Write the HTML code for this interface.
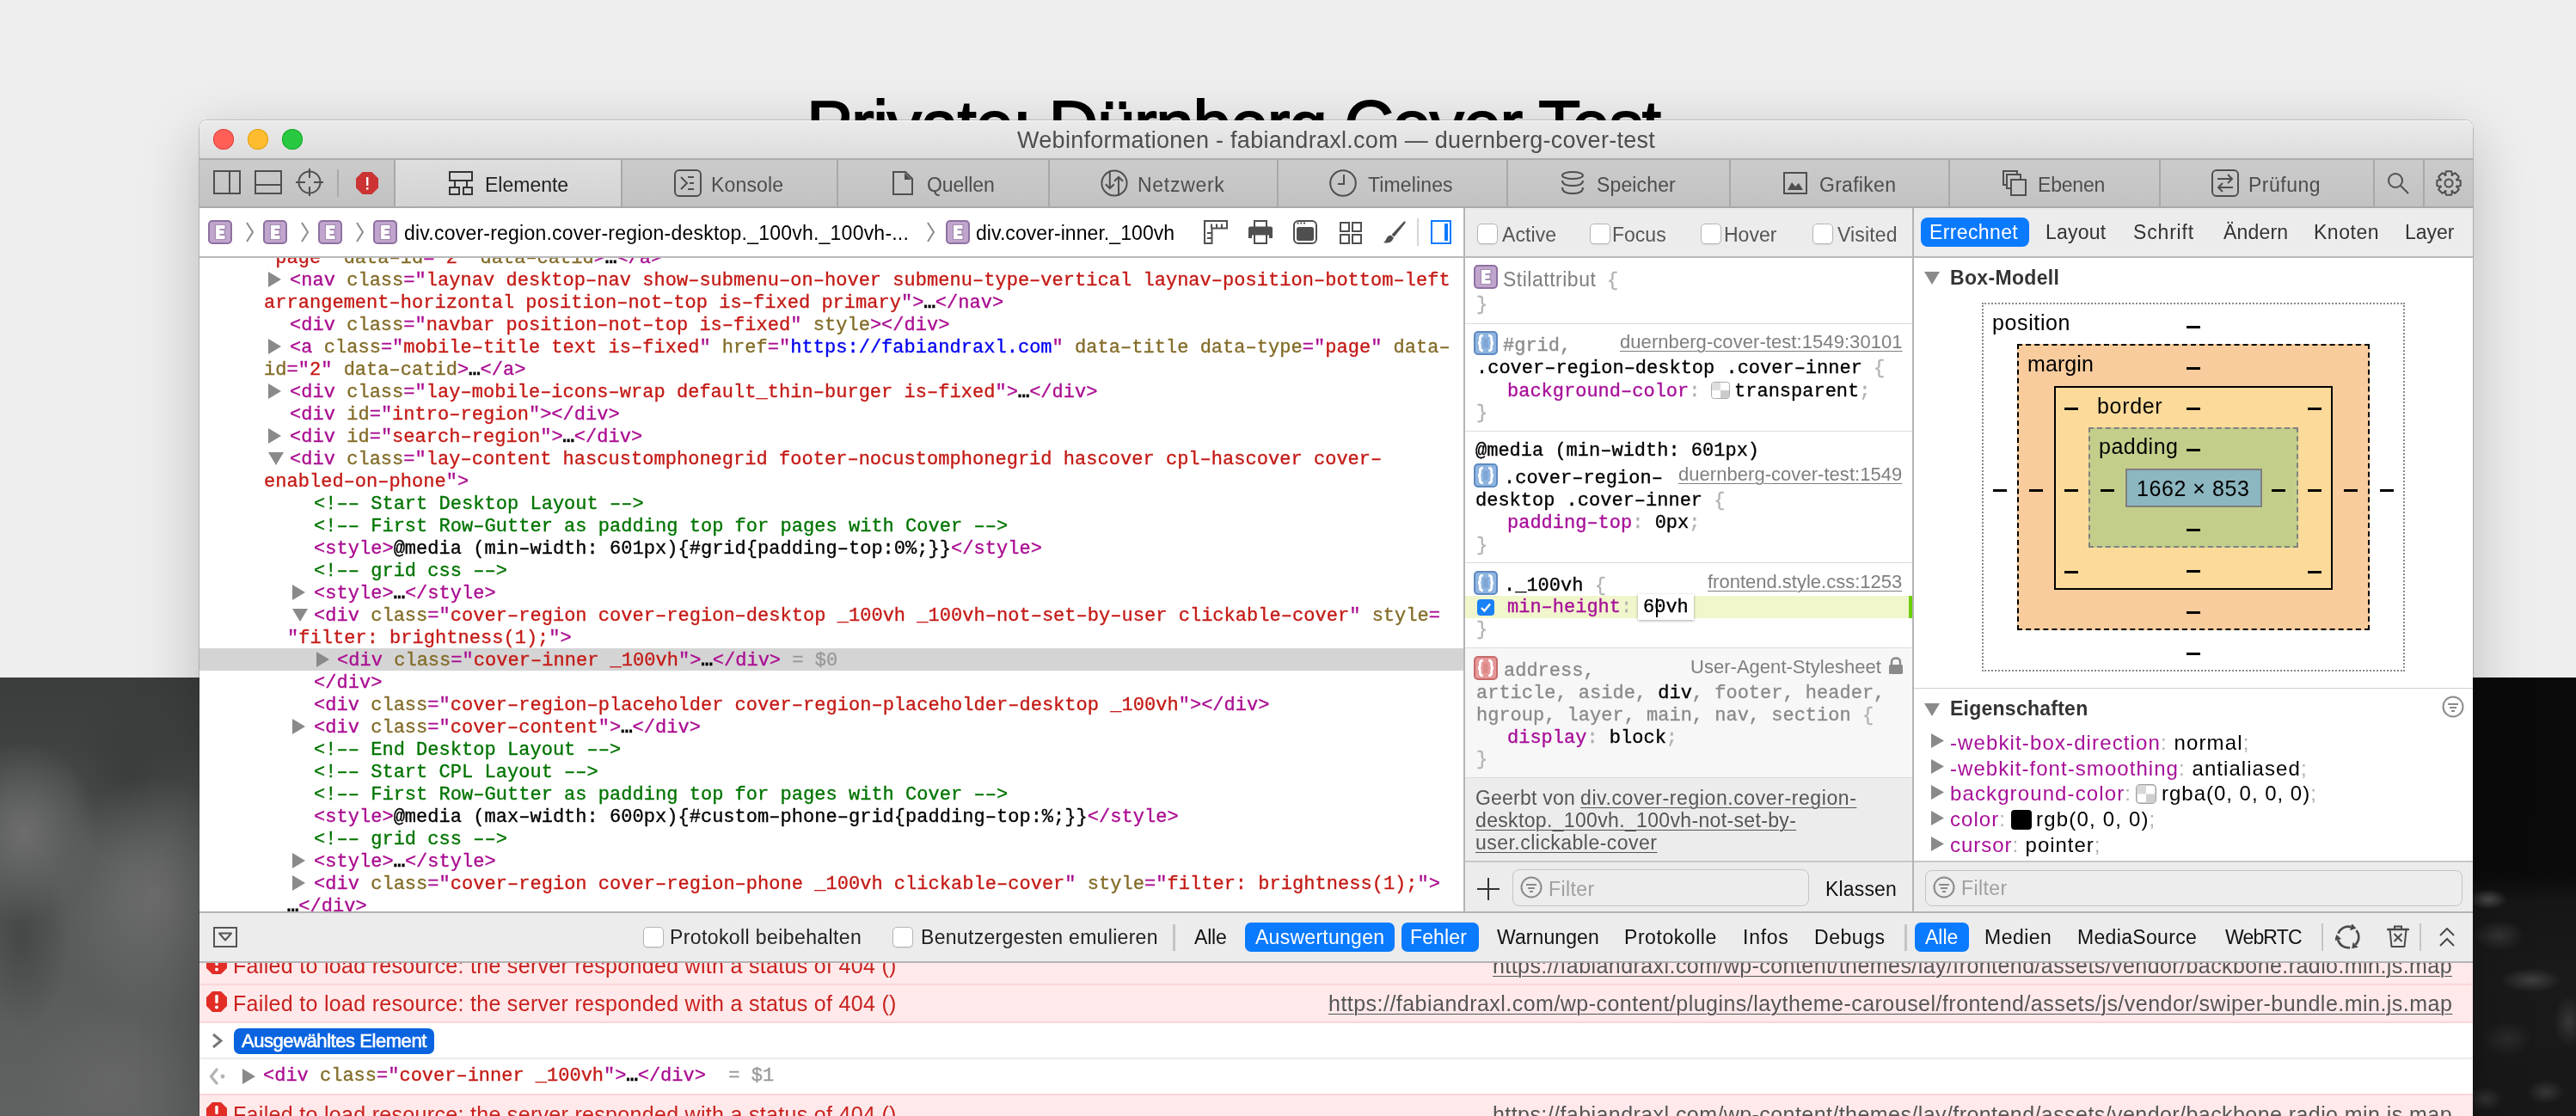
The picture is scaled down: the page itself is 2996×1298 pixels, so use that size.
<!DOCTYPE html><html><head><meta charset="utf-8"><style>
html,body{margin:0;padding:0;}
body{width:2996px;height:1298px;overflow:hidden;position:relative;background:#eeeeee;}
body div{position:absolute;}
.t{white-space:pre;line-height:1;will-change:transform;}
.m{-webkit-text-stroke:0.35px currentColor;}
.s{letter-spacing:0.3px;}
</style></head><body>
<div style="left:0px;top:0px;width:2996px;height:788px;background:#eeeeee;"></div><div class="t" style="left:938.00px;top:105.90px;font-family:'Liberation Sans', sans-serif;font-size:80px;color:#000;letter-spacing:-1.333px;-webkit-text-stroke:1.8px #000;">Private: Dürnberg Cover Test</div><div style="left:0px;top:788px;width:232px;height:510px;background:radial-gradient(ellipse 85px 105px at 28px 180px, rgba(114,114,114,0.85), rgba(114,114,114,0) 100%),radial-gradient(ellipse 120px 140px at 180px 255px, rgba(112,112,112,0.85), rgba(112,112,112,0) 100%),radial-gradient(ellipse 70px 110px at 150px 110px, rgba(56,58,58,0.75), rgba(56,58,58,0) 100%),radial-gradient(ellipse 55px 110px at 25px 300px, rgba(62,64,64,0.7), rgba(62,64,64,0) 100%),radial-gradient(ellipse 100px 90px at 130px 470px, rgba(108,108,108,0.5), rgba(108,108,108,0) 100%),linear-gradient(180deg,#3b3d3d 0px,#404242 80px,#4d4f4f 160px,#565858 260px,#5c5d5d 400px,#606161 510px);"></div><div style="left:2876px;top:788px;width:120px;height:510px;background:radial-gradient(ellipse 22px 12px at 18px 258px, rgba(120,120,120,0.55), rgba(120,120,120,0) 100%),radial-gradient(ellipse 30px 18px at 30px 300px, rgba(85,85,85,0.45), rgba(85,85,85,0) 100%),radial-gradient(ellipse 35px 14px at 68px 352px, rgba(100,100,100,0.5), rgba(100,100,100,0) 100%),radial-gradient(ellipse 18px 30px at 112px 400px, rgba(90,90,90,0.45), rgba(90,90,90,0) 100%),radial-gradient(ellipse 30px 20px at 40px 420px, rgba(70,70,70,0.4), rgba(70,70,70,0) 100%),radial-gradient(ellipse 22px 14px at 85px 482px, rgba(90,90,90,0.45), rgba(90,90,90,0) 100%),radial-gradient(ellipse 20px 14px at 15px 490px, rgba(90,90,90,0.4), rgba(90,90,90,0) 100%),linear-gradient(180deg,#0a0a0a 0px,#0b0b0b 230px,#161616 260px,#1a1a1a 350px,#181818 510px);"></div><div style="left:232px;top:140px;width:2644px;height:1298px;box-shadow:0 20px 70px rgba(0,0,0,0.22), 0 0 0 1px rgba(0,0,0,0.18);border-radius:9px 9px 0 0;"></div><div style="left:232px;top:140px;width:2644px;height:1158px;background:#fff;border-radius:9px 9px 0 0;overflow:hidden;"></div><div style="left:232px;top:140px;width:2644px;height:44px;background:linear-gradient(180deg,#ebebeb,#dcdcdc);border-radius:9px 9px 0 0;box-shadow:inset 0 1px 0 rgba(255,255,255,0.8);"></div><div style="left:232px;top:184px;width:2644px;height:2px;background:#ababab;"></div><div style="left:248px;top:150px;width:24px;height:24px;background:#ff5f57;border-radius:50%;box-shadow:inset 0 0 0 1px #e2463f;"></div><div style="left:288px;top:150px;width:24px;height:24px;background:#febc2e;border-radius:50%;box-shadow:inset 0 0 0 1px #e1a116;"></div><div style="left:328px;top:150px;width:24px;height:24px;background:#28c840;border-radius:50%;box-shadow:inset 0 0 0 1px #1aab29;"></div><div class="t" style="left:1183.00px;top:150.37px;font-family:'Liberation Sans', sans-serif;font-size:27px;color:#4d4d4d;letter-spacing:0.286px;">Webinformationen - fabiandraxl.com — duernberg-cover-test</div><div style="left:232px;top:186px;width:2644px;height:54px;background:linear-gradient(180deg,#cbcbcb,#c2c2c2);"></div><div style="left:232px;top:240px;width:2644px;height:2px;background:#a9a9a9;"></div><div style="left:460px;top:186px;width:262px;height:54px;background:linear-gradient(180deg,#dedede,#d3d3d3);"></div><div style="left:458px;top:186px;width:2px;height:54px;background:#a8a8a8;"></div><div style="left:722px;top:186px;width:2px;height:54px;background:#a8a8a8;"></div><div style="left:973px;top:186px;width:2px;height:54px;background:#a8a8a8;"></div><div style="left:1219px;top:186px;width:2px;height:54px;background:#a8a8a8;"></div><div style="left:1485px;top:186px;width:2px;height:54px;background:#a8a8a8;"></div><div style="left:1752px;top:186px;width:2px;height:54px;background:#a8a8a8;"></div><div style="left:2011px;top:186px;width:2px;height:54px;background:#a8a8a8;"></div><div style="left:2266px;top:186px;width:2px;height:54px;background:#a8a8a8;"></div><div style="left:2511px;top:186px;width:2px;height:54px;background:#a8a8a8;"></div><div style="left:2760px;top:186px;width:2px;height:54px;background:#a8a8a8;"></div><div style="left:2818px;top:186px;width:2px;height:54px;background:#a8a8a8;"></div><svg style="position:absolute;left:248px;top:198px;" width="32" height="28" viewBox="0 0 32 28"><rect x="1" y="1" width="30" height="26" fill="none" stroke="#4f4f4f" stroke-width="2"/><line x1="19" y1="1" x2="19" y2="27" stroke="#4f4f4f" stroke-width="2"/></svg><svg style="position:absolute;left:296px;top:198px;" width="32" height="28" viewBox="0 0 32 28"><rect x="1" y="1" width="30" height="26" fill="none" stroke="#4f4f4f" stroke-width="2"/><line x1="1" y1="17" x2="31" y2="17" stroke="#4f4f4f" stroke-width="2"/></svg><svg style="position:absolute;left:344px;top:196px;" width="32" height="32" viewBox="0 0 32 32"><circle cx="16" cy="16" r="12.5" fill="none" stroke="#4f4f4f" stroke-width="2"/><line x1="16" y1="0" x2="16" y2="11" stroke="#4f4f4f" stroke-width="2"/><line x1="16" y1="21" x2="16" y2="32" stroke="#4f4f4f" stroke-width="2"/><line x1="0" y1="16" x2="11" y2="16" stroke="#4f4f4f" stroke-width="2"/><line x1="21" y1="16" x2="32" y2="16" stroke="#4f4f4f" stroke-width="2"/></svg><div style="left:392px;top:197px;width:2px;height:32px;background:#a9a9a9;"></div><svg style="position:absolute;left:414px;top:200px;" width="26" height="26" viewBox="0 0 26 26"><polygon points="7.6,0 18.4,0 26,7.6 26,18.4 18.4,26 7.6,26 0,18.4 0,7.6" fill="#cc3333"/><rect x="12" y="6" width="2.4" height="10" fill="#fff"/><rect x="12" y="18" width="2.4" height="2.6" fill="#fff"/></svg><svg style="position:absolute;left:522px;top:199px;" width="28" height="28" viewBox="0 0 28 28"><rect x="1" y="1" width="26" height="10" fill="none" stroke="#333" stroke-width="2"/><line x1="7" y1="11" x2="7" y2="19" stroke="#333" stroke-width="2"/><line x1="21" y1="11" x2="21" y2="19" stroke="#333" stroke-width="2"/><rect x="1" y="19" width="11" height="8" fill="none" stroke="#333" stroke-width="2"/><rect x="17" y="19" width="10" height="8" fill="none" stroke="#333" stroke-width="2"/></svg><div class="t" style="left:564.00px;top:203.57px;font-family:'Liberation Sans', sans-serif;font-size:23px;color:#222;letter-spacing:0.000px;">Elemente</div><svg style="position:absolute;left:784px;top:197px;" width="32" height="32" viewBox="0 0 32 32"><rect x="1" y="1" width="30" height="30" rx="5" fill="none" stroke="#4f4f4f" stroke-width="2"/><polyline points="8,9 15,16 8,23" fill="none" stroke="#4f4f4f" stroke-width="2"/><line x1="16" y1="9" x2="23" y2="9" stroke="#4f4f4f" stroke-width="2"/><line x1="18" y1="16" x2="23" y2="16" stroke="#4f4f4f" stroke-width="2"/><line x1="16" y1="23" x2="23" y2="23" stroke="#4f4f4f" stroke-width="2"/></svg><div class="t" style="left:827.00px;top:203.57px;font-family:'Liberation Sans', sans-serif;font-size:23px;color:#4d4d4d;letter-spacing:0.167px;">Konsole</div><svg style="position:absolute;left:1038px;top:199px;" width="24" height="28" viewBox="0 0 24 28"><path d="M1 1 H15 L23 9 V27 H1 Z" fill="none" stroke="#4f4f4f" stroke-width="2"/><path d="M14 2 V10 H22" fill="#4f4f4f" stroke="none"/><polygon points="14,3 14,9 20,9" fill="#4f4f4f"/></svg><div class="t" style="left:1077.80px;top:203.57px;font-family:'Liberation Sans', sans-serif;font-size:23px;color:#4d4d4d;letter-spacing:-0.100px;">Quellen</div><svg style="position:absolute;left:1280px;top:197px;" width="32" height="32" viewBox="0 0 32 32"><circle cx="16" cy="16" r="14.6" fill="none" stroke="#4f4f4f" stroke-width="2"/><line x1="10.8" y1="1.5" x2="10.8" y2="22" stroke="#4f4f4f" stroke-width="2"/><polyline points="5.8,17.2 10.8,22.2 15.8,17.2" fill="none" stroke="#4f4f4f" stroke-width="2"/><line x1="21" y1="30.5" x2="21" y2="9.5" stroke="#4f4f4f" stroke-width="2"/><polyline points="16,13.8 21,8.8 26,13.8" fill="none" stroke="#4f4f4f" stroke-width="2"/></svg><div class="t" style="left:1323.00px;top:203.57px;font-family:'Liberation Sans', sans-serif;font-size:23px;color:#4d4d4d;letter-spacing:0.714px;">Netzwerk</div><svg style="position:absolute;left:1546px;top:197px;" width="32" height="32" viewBox="0 0 32 32"><circle cx="16" cy="16" r="14.8" fill="none" stroke="#4f4f4f" stroke-width="2"/><polyline points="17,6 17,17 10,17" fill="none" stroke="#4f4f4f" stroke-width="2"/></svg><div class="t" style="left:1591.00px;top:203.57px;font-family:'Liberation Sans', sans-serif;font-size:23px;color:#4d4d4d;letter-spacing:0.125px;">Timelines</div><svg style="position:absolute;left:1815px;top:199px;" width="28" height="28" viewBox="0 0 28 28"><ellipse cx="14" cy="5" rx="12" ry="4" fill="none" stroke="#4f4f4f" stroke-width="2"/><path d="M2 11 Q2 17 14 17 Q26 17 26 11" fill="none" stroke="#4f4f4f" stroke-width="2"/><path d="M2 19 Q2 26 14 26 Q26 26 26 19" fill="none" stroke="#4f4f4f" stroke-width="2"/></svg><div class="t" style="left:1857.00px;top:203.57px;font-family:'Liberation Sans', sans-serif;font-size:23px;color:#4d4d4d;letter-spacing:0.143px;">Speicher</div><svg style="position:absolute;left:2074px;top:200px;" width="28" height="26" viewBox="0 0 28 26"><rect x="1" y="1" width="26" height="24" fill="none" stroke="#4f4f4f" stroke-width="2"/><polygon points="5,21 10,12 14,17 18,13 23,21" fill="#4f4f4f"/></svg><div class="t" style="left:2116.00px;top:203.57px;font-family:'Liberation Sans', sans-serif;font-size:23px;color:#4d4d4d;letter-spacing:0.286px;">Grafiken</div><svg style="position:absolute;left:2329px;top:198px;" width="28" height="30" viewBox="0 0 28 30"><rect x="1" y="1" width="16" height="16" fill="none" stroke="#4f4f4f" stroke-width="2"/><rect x="5" y="5" width="16" height="16" fill="#c6c6c6" stroke="#4f4f4f" stroke-width="2"/><rect x="10" y="11" width="17" height="18" fill="#c6c6c6" stroke="#4f4f4f" stroke-width="2"/></svg><div class="t" style="left:2370.00px;top:203.57px;font-family:'Liberation Sans', sans-serif;font-size:23px;color:#4d4d4d;letter-spacing:-0.200px;">Ebenen</div><svg style="position:absolute;left:2572px;top:197px;" width="32" height="32" viewBox="0 0 32 32"><rect x="1" y="1" width="30" height="30" rx="5" fill="none" stroke="#4f4f4f" stroke-width="2"/><line x1="7" y1="11" x2="24" y2="11" stroke="#4f4f4f" stroke-width="2"/><polyline points="19,6 24,11 19,16" fill="none" stroke="#4f4f4f" stroke-width="2"/><line x1="8" y1="21" x2="25" y2="21" stroke="#4f4f4f" stroke-width="2"/><polyline points="13,16 8,21 13,26" fill="none" stroke="#4f4f4f" stroke-width="2"/></svg><div class="t" style="left:2615.00px;top:203.57px;font-family:'Liberation Sans', sans-serif;font-size:23px;color:#4d4d4d;letter-spacing:0.500px;">Prüfung</div><svg style="position:absolute;left:2776px;top:200px;" width="26" height="26" viewBox="0 0 26 26"><circle cx="10" cy="10" r="8" fill="none" stroke="#4f4f4f" stroke-width="2"/><line x1="16" y1="16" x2="25" y2="25" stroke="#4f4f4f" stroke-width="2"/></svg><svg style="position:absolute;left:2832px;top:197px;" width="32" height="32" viewBox="0 0 32 32"><polygon points="29.66,12.94 29.66,19.06 25.00,20.35 25.44,19.29 27.82,23.50 23.50,27.82 19.29,25.44 20.35,25.00 19.06,29.66 12.94,29.66 11.65,25.00 12.71,25.44 8.50,27.82 4.18,23.50 6.56,19.29 7.00,20.35 2.34,19.06 2.34,12.94 7.00,11.65 6.56,12.71 4.18,8.50 8.50,4.18 12.71,6.56 11.65,7.00 12.94,2.34 19.06,2.34 20.35,7.00 19.29,6.56 23.50,4.18 27.82,8.50 25.44,12.71 25.00,11.65" fill="none" stroke="#4f4f4f" stroke-width="2" stroke-linejoin="round"/><circle cx="16" cy="16" r="4.5" fill="none" stroke="#4f4f4f" stroke-width="2"/></svg><div style="left:232px;top:242px;width:1470px;height:56px;background:#fff;"></div><div style="left:1702px;top:242px;width:2px;height:818px;background:#b4b4b4;"></div><div style="left:1704px;top:242px;width:520px;height:56px;background:#ececec;"></div><div style="left:2224px;top:242px;width:2px;height:818px;background:#b4b4b4;"></div><div style="left:2226px;top:242px;width:650px;height:56px;background:#ececec;"></div><div style="left:232px;top:298px;width:2644px;height:2px;background:#b9b9b9;"></div><svg style="position:absolute;left:242px;top:256px;" width="28" height="28" viewBox="0 0 28 28"><rect x="1" y="1" width="26" height="26" rx="4" fill="#c0a5cd" stroke="#8f70a0" stroke-width="2"/><path d="M8.5 5.5 H20 V10.5 H14 V11.5 H19 V16.5 H14 V17.5 H20 V22.5 H8.5 Z" fill="#fff" stroke="#8f70a0" stroke-width="1.2" stroke-opacity="0.7"/></svg><svg style="position:absolute;left:306px;top:256px;" width="28" height="28" viewBox="0 0 28 28"><rect x="1" y="1" width="26" height="26" rx="4" fill="#c0a5cd" stroke="#8f70a0" stroke-width="2"/><path d="M8.5 5.5 H20 V10.5 H14 V11.5 H19 V16.5 H14 V17.5 H20 V22.5 H8.5 Z" fill="#fff" stroke="#8f70a0" stroke-width="1.2" stroke-opacity="0.7"/></svg><svg style="position:absolute;left:370px;top:256px;" width="28" height="28" viewBox="0 0 28 28"><rect x="1" y="1" width="26" height="26" rx="4" fill="#c0a5cd" stroke="#8f70a0" stroke-width="2"/><path d="M8.5 5.5 H20 V10.5 H14 V11.5 H19 V16.5 H14 V17.5 H20 V22.5 H8.5 Z" fill="#fff" stroke="#8f70a0" stroke-width="1.2" stroke-opacity="0.7"/></svg><svg style="position:absolute;left:434px;top:256px;" width="28" height="28" viewBox="0 0 28 28"><rect x="1" y="1" width="26" height="26" rx="4" fill="#c0a5cd" stroke="#8f70a0" stroke-width="2"/><path d="M8.5 5.5 H20 V10.5 H14 V11.5 H19 V16.5 H14 V17.5 H20 V22.5 H8.5 Z" fill="#fff" stroke="#8f70a0" stroke-width="1.2" stroke-opacity="0.7"/></svg><svg style="position:absolute;left:286px;top:258px;" width="10" height="24" viewBox="0 0 10 24"><polyline points="1,1 8,12 1,23" fill="none" stroke="#8a8a8a" stroke-width="2"/></svg><svg style="position:absolute;left:350px;top:258px;" width="10" height="24" viewBox="0 0 10 24"><polyline points="1,1 8,12 1,23" fill="none" stroke="#8a8a8a" stroke-width="2"/></svg><svg style="position:absolute;left:414px;top:258px;" width="10" height="24" viewBox="0 0 10 24"><polyline points="1,1 8,12 1,23" fill="none" stroke="#8a8a8a" stroke-width="2"/></svg><div class="t" style="left:470.00px;top:259.57px;font-family:'Liberation Sans', sans-serif;font-size:23px;color:#000;letter-spacing:0.222px;">div.cover-region.cover-region-desktop._100vh._100vh-...</div><svg style="position:absolute;left:1078px;top:258px;" width="10" height="24" viewBox="0 0 10 24"><polyline points="1,1 8,12 1,23" fill="none" stroke="#8a8a8a" stroke-width="2"/></svg><svg style="position:absolute;left:1100px;top:256px;" width="28" height="28" viewBox="0 0 28 28"><rect x="1" y="1" width="26" height="26" rx="4" fill="#c0a5cd" stroke="#8f70a0" stroke-width="2"/><path d="M8.5 5.5 H20 V10.5 H14 V11.5 H19 V16.5 H14 V17.5 H20 V22.5 H8.5 Z" fill="#fff" stroke="#8f70a0" stroke-width="1.2" stroke-opacity="0.7"/></svg><div class="t" style="left:1135.40px;top:259.57px;font-family:'Liberation Sans', sans-serif;font-size:23px;color:#000;letter-spacing:0.067px;">div.cover-inner._100vh</div><svg style="position:absolute;left:1400px;top:256px;" width="28" height="28" viewBox="0 0 28 28"><path d="M1 1 H27 V9.5 H9.5 V27 H1 Z" fill="none" stroke="#4f4f4f" stroke-width="2" stroke-linejoin="miter"/><path d="M9 4.5 V10 M15 4.5 V10 M21 4.5 V10 M4 15 H10 M4 21 H10" stroke="#4f4f4f" stroke-width="2"/></svg><svg style="position:absolute;left:1452px;top:256px;" width="28" height="28" viewBox="0 0 28 28"><path d="M7 8 V1 H21 V8" fill="none" stroke="#4f4f4f" stroke-width="2"/><path d="M2 7.5 H26 Q28 7.5 28 9.5 V21 H24 V17.5 H4 V21 H0 V9.5 Q0 7.5 2 7.5 Z" fill="#4f4f4f"/><path d="M7 17 V27 H21 V17" fill="none" stroke="#4f4f4f" stroke-width="2"/></svg><svg style="position:absolute;left:1504px;top:256px;" width="28" height="28" viewBox="0 0 28 28"><rect x="1" y="1" width="26" height="26" rx="5" fill="none" stroke="#4f4f4f" stroke-width="2"/><rect x="4" y="8" width="20" height="16" rx="2.5" fill="#4f4f4f"/><rect x="4.5" y="2.5" width="2" height="2" fill="#4f4f4f"/><rect x="8.3" y="2.5" width="2" height="2" fill="#4f4f4f"/><rect x="12" y="2.5" width="2" height="2" fill="#4f4f4f"/></svg><svg style="position:absolute;left:1558px;top:258px;" width="26" height="26" viewBox="0 0 26 26"><rect x="1" y="1" width="10" height="10" fill="none" stroke="#4f4f4f" stroke-width="2"/><rect x="15" y="1" width="10" height="10" fill="none" stroke="#4f4f4f" stroke-width="2"/><rect x="1" y="15" width="10" height="10" fill="none" stroke="#4f4f4f" stroke-width="2"/><rect x="15" y="15" width="10" height="10" fill="none" stroke="#4f4f4f" stroke-width="2"/></svg><svg style="position:absolute;left:1609px;top:257px;" width="26" height="26" viewBox="0 0 26 26"><path d="M25.5 0.5 Q26 1.5 25 3 L12.5 18.5 L9.5 16 L23.5 1 Q24.8 0 25.5 0.5 Z" fill="#4f4f4f"/><path d="M8.8 16.8 L11.8 19.3 Q11 24 6 25.3 Q2.5 26 0 25 Q2 24 3 21.5 Q4.5 17 8.8 16.8 Z" fill="#4f4f4f"/></svg><div style="left:1648px;top:254px;width:2px;height:32px;background:#d6d6d6;"></div><svg style="position:absolute;left:1664px;top:256px;" width="24" height="28" viewBox="0 0 24 28"><rect x="1" y="1" width="22" height="26" fill="none" stroke="#0a7aff" stroke-width="2"/><rect x="16" y="4" width="4" height="20" fill="#0a7aff"/></svg><div style="left:1718px;top:260px;width:22px;height:22px;background:#fff;border:1px solid #b5b5b5;border-radius:5px;box-shadow:0 1px 1px rgba(0,0,0,0.08);"></div><div class="t" style="left:1747.00px;top:261.57px;font-family:'Liberation Sans', sans-serif;font-size:23px;color:#555;letter-spacing:0.100px;">Active</div><div style="left:1849px;top:260px;width:22px;height:22px;background:#fff;border:1px solid #b5b5b5;border-radius:5px;box-shadow:0 1px 1px rgba(0,0,0,0.08);"></div><div class="t" style="left:1875.00px;top:261.57px;font-family:'Liberation Sans', sans-serif;font-size:23px;color:#555;letter-spacing:0.000px;">Focus</div><div style="left:1978px;top:260px;width:22px;height:22px;background:#fff;border:1px solid #b5b5b5;border-radius:5px;box-shadow:0 1px 1px rgba(0,0,0,0.08);"></div><div class="t" style="left:2004.60px;top:261.57px;font-family:'Liberation Sans', sans-serif;font-size:23px;color:#555;letter-spacing:0.000px;">Hover</div><div style="left:2108px;top:260px;width:22px;height:22px;background:#fff;border:1px solid #b5b5b5;border-radius:5px;box-shadow:0 1px 1px rgba(0,0,0,0.08);"></div><div class="t" style="left:2137.00px;top:261.57px;font-family:'Liberation Sans', sans-serif;font-size:23px;color:#555;letter-spacing:0.167px;">Visited</div><div style="left:2234px;top:253px;width:126px;height:34px;background:#0a7aff;border-radius:8px;"></div><div class="t" style="left:2243.80px;top:258.57px;font-family:'Liberation Sans', sans-serif;font-size:23px;color:#fff;letter-spacing:0.375px;">Errechnet</div><div class="t" style="left:2378.60px;top:258.57px;font-family:'Liberation Sans', sans-serif;font-size:23px;color:#333;letter-spacing:0.200px;">Layout</div><div class="t" style="left:2481.30px;top:258.57px;font-family:'Liberation Sans', sans-serif;font-size:23px;color:#333;letter-spacing:0.833px;">Schrift</div><div class="t" style="left:2585.50px;top:258.57px;font-family:'Liberation Sans', sans-serif;font-size:23px;color:#333;letter-spacing:0.200px;">Ändern</div><div class="t" style="left:2691.00px;top:258.57px;font-family:'Liberation Sans', sans-serif;font-size:23px;color:#333;letter-spacing:0.520px;">Knoten</div><div class="t" style="left:2797.00px;top:258.57px;font-family:'Liberation Sans', sans-serif;font-size:23px;color:#333;letter-spacing:0.000px;">Layer</div><div style="left:232px;top:300px;width:1470px;height:760px;background:#fff;overflow:hidden;"></div><div style="left:232px;top:300px;width:1470px;height:760px;overflow:hidden;"><div style="left:0px;top:454px;width:1470px;height:26px;background:#d4d4d4;"></div><div class="t m" style="left:74.60000000000002px;top:-9.85px;font-family:'Liberation Mono', monospace;font-size:22px;letter-spacing:0.03px;"><span style="color:#aa0d91">"</span><span style="color:#c41a16">page</span><span style="color:#aa0d91">"</span><span style="color:#000"> </span><span style="color:#836c28">data–id</span><span style="color:#aa0d91">=</span><span style="color:#aa0d91">"</span><span style="color:#c41a16">2</span><span style="color:#aa0d91">"</span><span style="color:#000"> </span><span style="color:#836c28">data–catid</span><span style="color:#aa0d91">&gt;</span><span style="color:#000;font-weight:bold">…</span><span style="color:#aa0d91">&lt;/a&gt;</span></div><div class="t m" style="left:104.80000000000001px;top:16.15px;font-family:'Liberation Mono', monospace;font-size:22px;letter-spacing:0.03px;"><span style="color:#aa0d91">&lt;nav</span><span style="color:#000"> </span><span style="color:#836c28">class</span><span style="color:#aa0d91">=</span><span style="color:#aa0d91">"</span><span style="color:#c41a16">laynav desktop–nav show–submenu–on–hover submenu–type–vertical laynav–position–bottom–left</span></div><svg style="position:absolute;left:80px;top:16px" width="16" height="18"><polygon points="0,0 15,9 0,18" fill="#8a8a8a"/></svg><div class="t m" style="left:74.60000000000002px;top:42.15px;font-family:'Liberation Mono', monospace;font-size:22px;letter-spacing:0.03px;"><span style="color:#c41a16">arrangement–horizontal position–not–top is–fixed primary</span><span style="color:#aa0d91">"</span><span style="color:#aa0d91">&gt;</span><span style="color:#000;font-weight:bold">…</span><span style="color:#aa0d91">&lt;/nav&gt;</span></div><div class="t m" style="left:104.80000000000001px;top:68.15px;font-family:'Liberation Mono', monospace;font-size:22px;letter-spacing:0.03px;"><span style="color:#aa0d91">&lt;div</span><span style="color:#000"> </span><span style="color:#836c28">class</span><span style="color:#aa0d91">=</span><span style="color:#aa0d91">"</span><span style="color:#c41a16">navbar position–not–top is–fixed</span><span style="color:#aa0d91">"</span><span style="color:#000"> </span><span style="color:#836c28">style</span><span style="color:#aa0d91">&gt;&lt;/div&gt;</span></div><div class="t m" style="left:104.80000000000001px;top:94.15px;font-family:'Liberation Mono', monospace;font-size:22px;letter-spacing:0.03px;"><span style="color:#aa0d91">&lt;a</span><span style="color:#000"> </span><span style="color:#836c28">class</span><span style="color:#aa0d91">=</span><span style="color:#aa0d91">"</span><span style="color:#c41a16">mobile–title text is–fixed</span><span style="color:#aa0d91">"</span><span style="color:#000"> </span><span style="color:#836c28">href</span><span style="color:#aa0d91">=</span><span style="color:#aa0d91">"</span><span style="color:#0000f2">https://fabiandraxl.com</span><span style="color:#aa0d91">"</span><span style="color:#000"> </span><span style="color:#836c28">data–title</span><span style="color:#000"> </span><span style="color:#836c28">data–type</span><span style="color:#aa0d91">=</span><span style="color:#aa0d91">"</span><span style="color:#c41a16">page</span><span style="color:#aa0d91">"</span><span style="color:#000"> </span><span style="color:#836c28">data–</span></div><svg style="position:absolute;left:80px;top:94px" width="16" height="18"><polygon points="0,0 15,9 0,18" fill="#8a8a8a"/></svg><div class="t m" style="left:74.60000000000002px;top:120.15px;font-family:'Liberation Mono', monospace;font-size:22px;letter-spacing:0.03px;"><span style="color:#836c28">id</span><span style="color:#aa0d91">=</span><span style="color:#aa0d91">"</span><span style="color:#c41a16">2</span><span style="color:#aa0d91">"</span><span style="color:#000"> </span><span style="color:#836c28">data–catid</span><span style="color:#aa0d91">&gt;</span><span style="color:#000;font-weight:bold">…</span><span style="color:#aa0d91">&lt;/a&gt;</span></div><div class="t m" style="left:104.80000000000001px;top:146.15px;font-family:'Liberation Mono', monospace;font-size:22px;letter-spacing:0.03px;"><span style="color:#aa0d91">&lt;div</span><span style="color:#000"> </span><span style="color:#836c28">class</span><span style="color:#aa0d91">=</span><span style="color:#aa0d91">"</span><span style="color:#c41a16">lay–mobile–icons–wrap default_thin–burger is–fixed</span><span style="color:#aa0d91">"</span><span style="color:#aa0d91">&gt;</span><span style="color:#000;font-weight:bold">…</span><span style="color:#aa0d91">&lt;/div&gt;</span></div><svg style="position:absolute;left:80px;top:146px" width="16" height="18"><polygon points="0,0 15,9 0,18" fill="#8a8a8a"/></svg><div class="t m" style="left:104.80000000000001px;top:172.15px;font-family:'Liberation Mono', monospace;font-size:22px;letter-spacing:0.03px;"><span style="color:#aa0d91">&lt;div</span><span style="color:#000"> </span><span style="color:#836c28">id</span><span style="color:#aa0d91">=</span><span style="color:#aa0d91">"</span><span style="color:#c41a16">intro–region</span><span style="color:#aa0d91">"</span><span style="color:#aa0d91">&gt;&lt;/div&gt;</span></div><div class="t m" style="left:104.80000000000001px;top:198.15px;font-family:'Liberation Mono', monospace;font-size:22px;letter-spacing:0.03px;"><span style="color:#aa0d91">&lt;div</span><span style="color:#000"> </span><span style="color:#836c28">id</span><span style="color:#aa0d91">=</span><span style="color:#aa0d91">"</span><span style="color:#c41a16">search–region</span><span style="color:#aa0d91">"</span><span style="color:#aa0d91">&gt;</span><span style="color:#000;font-weight:bold">…</span><span style="color:#aa0d91">&lt;/div&gt;</span></div><svg style="position:absolute;left:80px;top:198px" width="16" height="18"><polygon points="0,0 15,9 0,18" fill="#8a8a8a"/></svg><div class="t m" style="left:104.80000000000001px;top:224.15px;font-family:'Liberation Mono', monospace;font-size:22px;letter-spacing:0.03px;"><span style="color:#aa0d91">&lt;div</span><span style="color:#000"> </span><span style="color:#836c28">class</span><span style="color:#aa0d91">=</span><span style="color:#aa0d91">"</span><span style="color:#c41a16">lay–content hascustomphonegrid footer–nocustomphonegrid hascover cpl–hascover cover–</span></div><svg style="position:absolute;left:80px;top:226px" width="18" height="16"><polygon points="0,0 18,0 9,15" fill="#8a8a8a"/></svg><div class="t m" style="left:74.60000000000002px;top:250.15px;font-family:'Liberation Mono', monospace;font-size:22px;letter-spacing:0.03px;"><span style="color:#c41a16">enabled–on–phone</span><span style="color:#aa0d91">"</span><span style="color:#aa0d91">&gt;</span></div><div class="t m" style="left:132.5px;top:276.15px;font-family:'Liberation Mono', monospace;font-size:22px;letter-spacing:0.03px;"><span style="color:#007400">&lt;!–– Start Desktop Layout ––&gt;</span></div><div class="t m" style="left:132.5px;top:302.15px;font-family:'Liberation Mono', monospace;font-size:22px;letter-spacing:0.03px;"><span style="color:#007400">&lt;!–– First Row–Gutter as padding top for pages with Cover ––&gt;</span></div><div class="t m" style="left:132.5px;top:328.15px;font-family:'Liberation Mono', monospace;font-size:22px;letter-spacing:0.03px;"><span style="color:#aa0d91">&lt;style&gt;</span><span style="color:#000">@media (min–width: 601px){#grid{padding–top:0%;}}</span><span style="color:#aa0d91">&lt;/style&gt;</span></div><div class="t m" style="left:132.5px;top:354.15px;font-family:'Liberation Mono', monospace;font-size:22px;letter-spacing:0.03px;"><span style="color:#007400">&lt;!–– grid css ––&gt;</span></div><div class="t m" style="left:132.5px;top:380.15px;font-family:'Liberation Mono', monospace;font-size:22px;letter-spacing:0.03px;"><span style="color:#aa0d91">&lt;style&gt;</span><span style="color:#000;font-weight:bold">…</span><span style="color:#aa0d91">&lt;/style&gt;</span></div><svg style="position:absolute;left:108px;top:380px" width="16" height="18"><polygon points="0,0 15,9 0,18" fill="#8a8a8a"/></svg><div class="t m" style="left:132.5px;top:406.15px;font-family:'Liberation Mono', monospace;font-size:22px;letter-spacing:0.03px;"><span style="color:#aa0d91">&lt;div</span><span style="color:#000"> </span><span style="color:#836c28">class</span><span style="color:#aa0d91">=</span><span style="color:#aa0d91">"</span><span style="color:#c41a16">cover–region cover–region–desktop _100vh _100vh–not–set–by–user clickable–cover</span><span style="color:#aa0d91">"</span><span style="color:#000"> </span><span style="color:#836c28">style</span><span style="color:#aa0d91">=</span></div><svg style="position:absolute;left:108px;top:408px" width="18" height="16"><polygon points="0,0 18,0 9,15" fill="#8a8a8a"/></svg><div class="t m" style="left:102.30000000000001px;top:432.15px;font-family:'Liberation Mono', monospace;font-size:22px;letter-spacing:0.03px;"><span style="color:#aa0d91">"</span><span style="color:#c41a16">filter: brightness(1);</span><span style="color:#aa0d91">"</span><span style="color:#aa0d91">&gt;</span></div><div class="t m" style="left:160.39999999999998px;top:458.15px;font-family:'Liberation Mono', monospace;font-size:22px;letter-spacing:0.03px;"><span style="color:#aa0d91">&lt;div</span><span style="color:#000"> </span><span style="color:#836c28">class</span><span style="color:#aa0d91">=</span><span style="color:#aa0d91">"</span><span style="color:#c41a16">cover–inner _100vh</span><span style="color:#aa0d91">"</span><span style="color:#aa0d91">&gt;</span><span style="color:#000;font-weight:bold">…</span><span style="color:#aa0d91">&lt;/div&gt;</span><span style="color:#000"> </span><span style="color:#999">= $0</span></div><svg style="position:absolute;left:136px;top:458px" width="16" height="18"><polygon points="0,0 15,9 0,18" fill="#8a8a8a"/></svg><div class="t m" style="left:132.5px;top:484.15px;font-family:'Liberation Mono', monospace;font-size:22px;letter-spacing:0.03px;"><span style="color:#aa0d91">&lt;/div&gt;</span></div><div class="t m" style="left:132.5px;top:510.15px;font-family:'Liberation Mono', monospace;font-size:22px;letter-spacing:0.03px;"><span style="color:#aa0d91">&lt;div</span><span style="color:#000"> </span><span style="color:#836c28">class</span><span style="color:#aa0d91">=</span><span style="color:#aa0d91">"</span><span style="color:#c41a16">cover–region–placeholder cover–region–placeholder–desktop _100vh</span><span style="color:#aa0d91">"</span><span style="color:#aa0d91">&gt;&lt;/div&gt;</span></div><div class="t m" style="left:132.5px;top:536.15px;font-family:'Liberation Mono', monospace;font-size:22px;letter-spacing:0.03px;"><span style="color:#aa0d91">&lt;div</span><span style="color:#000"> </span><span style="color:#836c28">class</span><span style="color:#aa0d91">=</span><span style="color:#aa0d91">"</span><span style="color:#c41a16">cover–content</span><span style="color:#aa0d91">"</span><span style="color:#aa0d91">&gt;</span><span style="color:#000;font-weight:bold">…</span><span style="color:#aa0d91">&lt;/div&gt;</span></div><svg style="position:absolute;left:108px;top:536px" width="16" height="18"><polygon points="0,0 15,9 0,18" fill="#8a8a8a"/></svg><div class="t m" style="left:132.5px;top:562.15px;font-family:'Liberation Mono', monospace;font-size:22px;letter-spacing:0.03px;"><span style="color:#007400">&lt;!–– End Desktop Layout ––&gt;</span></div><div class="t m" style="left:132.5px;top:588.15px;font-family:'Liberation Mono', monospace;font-size:22px;letter-spacing:0.03px;"><span style="color:#007400">&lt;!–– Start CPL Layout ––&gt;</span></div><div class="t m" style="left:132.5px;top:614.15px;font-family:'Liberation Mono', monospace;font-size:22px;letter-spacing:0.03px;"><span style="color:#007400">&lt;!–– First Row–Gutter as padding top for pages with Cover ––&gt;</span></div><div class="t m" style="left:132.5px;top:640.15px;font-family:'Liberation Mono', monospace;font-size:22px;letter-spacing:0.03px;"><span style="color:#aa0d91">&lt;style&gt;</span><span style="color:#000">@media (max–width: 600px){#custom–phone–grid{padding–top:%;}}</span><span style="color:#aa0d91">&lt;/style&gt;</span></div><div class="t m" style="left:132.5px;top:666.15px;font-family:'Liberation Mono', monospace;font-size:22px;letter-spacing:0.03px;"><span style="color:#007400">&lt;!–– grid css ––&gt;</span></div><div class="t m" style="left:132.5px;top:692.15px;font-family:'Liberation Mono', monospace;font-size:22px;letter-spacing:0.03px;"><span style="color:#aa0d91">&lt;style&gt;</span><span style="color:#000;font-weight:bold">…</span><span style="color:#aa0d91">&lt;/style&gt;</span></div><svg style="position:absolute;left:108px;top:692px" width="16" height="18"><polygon points="0,0 15,9 0,18" fill="#8a8a8a"/></svg><div class="t m" style="left:132.5px;top:718.15px;font-family:'Liberation Mono', monospace;font-size:22px;letter-spacing:0.03px;"><span style="color:#aa0d91">&lt;div</span><span style="color:#000"> </span><span style="color:#836c28">class</span><span style="color:#aa0d91">=</span><span style="color:#aa0d91">"</span><span style="color:#c41a16">cover–region cover–region–phone _100vh clickable–cover</span><span style="color:#aa0d91">"</span><span style="color:#000"> </span><span style="color:#836c28">style</span><span style="color:#aa0d91">=</span><span style="color:#aa0d91">"</span><span style="color:#c41a16">filter: brightness(1);</span><span style="color:#aa0d91">"</span><span style="color:#aa0d91">&gt;</span></div><svg style="position:absolute;left:108px;top:718px" width="16" height="18"><polygon points="0,0 15,9 0,18" fill="#8a8a8a"/></svg><div class="t m" style="left:102.30000000000001px;top:744.15px;font-family:'Liberation Mono', monospace;font-size:22px;letter-spacing:0.03px;"><span style="color:#000;font-weight:bold">…</span><span style="color:#aa0d91">&lt;/div&gt;</span></div></div><div style="left:1704px;top:300px;width:520px;height:703px;background:#fff;"></div><svg style="position:absolute;left:1714px;top:308px;" width="28" height="28" viewBox="0 0 28 28"><rect x="1" y="1" width="26" height="26" rx="4" fill="#c0a5cd" stroke="#8f70a0" stroke-width="2"/><path d="M8.5 5.5 H20 V10.5 H14 V11.5 H19 V16.5 H14 V17.5 H20 V22.5 H8.5 Z" fill="#fff" stroke="#8f70a0" stroke-width="1.2" stroke-opacity="0.7"/></svg><div class="t" style="left:1748.00px;top:313.57px;font-family:'Liberation Sans', sans-serif;font-size:23px;color:#7f7f7f;letter-spacing:0.509px;">Stilattribut</div><div class="t m" style="left:1869px;top:316.15px;font-family:'Liberation Mono', monospace;font-size:22px;"><span style="color:#b2b2b2">{</span></div><div class="t m" style="left:1717px;top:344.15px;font-family:'Liberation Mono', monospace;font-size:22px;"><span style="color:#b2b2b2">}</span></div><div style="left:1704px;top:376px;width:520px;height:1px;background:#dcdcdc;"></div><svg style="position:absolute;left:1714px;top:385px;" width="28" height="28" viewBox="0 0 28 28"><rect x="1" y="1" width="26" height="26" rx="4" fill="#8fb5e0" stroke="#5f8ac0" stroke-width="2"/><rect x="11.3" y="8.5" width="5.4" height="11" fill="#5f8ac0" opacity="0.35"/><path d="M10.8 5.2 Q7.3 5.2 7.3 8.5 V11 Q7.3 14 5 14 Q7.3 14 7.3 17 V19.5 Q7.3 22.8 10.8 22.8" fill="none" stroke="#fff" stroke-width="2.8"/><path d="M17.2 5.2 Q20.7 5.2 20.7 8.5 V11 Q20.7 14 23 14 Q20.7 14 20.7 17 V19.5 Q20.7 22.8 17.2 22.8" fill="none" stroke="#fff" stroke-width="2.8"/></svg><div class="t m" style="left:1748px;top:392.15px;font-family:'Liberation Mono', monospace;font-size:22px;"><span style="color:#8a8a8a">#grid,</span></div><div class="t" style="left:1884.00px;top:387.37px;font-family:'Liberation Sans', sans-serif;font-size:22px;color:#7f7f7f;letter-spacing:0.067px;text-decoration:underline;text-decoration-thickness:1px;text-underline-offset:3px;">duernberg-cover-test:1549:30101</div><div class="t m" style="left:1717px;top:418.15px;font-family:'Liberation Mono', monospace;font-size:22px;"><span style="color:#000">.cover–region–desktop .cover–inner </span><span style="color:#b2b2b2">{</span></div><div class="t m" style="left:1753px;top:445.15px;font-family:'Liberation Mono', monospace;font-size:22px;"><span style="color:#a70f99">background–color</span><span style="color:#b2b2b2">:</span><span style="color:#000">   transparent</span><span style="color:#b2b2b2">;</span></div><svg style="position:absolute;left:1990px;top:444px;" width="22" height="20" viewBox="0 0 22 20"><rect x="0.5" y="0.5" width="21" height="19" rx="3" fill="#fff" stroke="#aaa"/><rect x="1" y="1" width="10" height="9" fill="#ddd"/><rect x="11" y="10" width="10" height="9" fill="#ccc"/></svg><div class="t m" style="left:1717px;top:470.15px;font-family:'Liberation Mono', monospace;font-size:22px;"><span style="color:#b2b2b2">}</span></div><div style="left:1704px;top:501px;width:520px;height:1px;background:#dcdcdc;"></div><div class="t m" style="left:1716px;top:514.15px;font-family:'Liberation Mono', monospace;font-size:22px;"><span style="color:#000">@media (min–width: 601px)</span></div><svg style="position:absolute;left:1714px;top:539px;" width="28" height="28" viewBox="0 0 28 28"><rect x="1" y="1" width="26" height="26" rx="4" fill="#8fb5e0" stroke="#5f8ac0" stroke-width="2"/><rect x="11.3" y="8.5" width="5.4" height="11" fill="#5f8ac0" opacity="0.35"/><path d="M10.8 5.2 Q7.3 5.2 7.3 8.5 V11 Q7.3 14 5 14 Q7.3 14 7.3 17 V19.5 Q7.3 22.8 10.8 22.8" fill="none" stroke="#fff" stroke-width="2.8"/><path d="M17.2 5.2 Q20.7 5.2 20.7 8.5 V11 Q20.7 14 23 14 Q20.7 14 20.7 17 V19.5 Q20.7 22.8 17.2 22.8" fill="none" stroke="#fff" stroke-width="2.8"/></svg><div class="t m" style="left:1749px;top:546.15px;font-family:'Liberation Mono', monospace;font-size:22px;"><span style="color:#000">.cover–region–</span></div><div class="t" style="left:1952.00px;top:541.37px;font-family:'Liberation Sans', sans-serif;font-size:22px;color:#7f7f7f;letter-spacing:0.042px;text-decoration:underline;text-decoration-thickness:1px;text-underline-offset:3px;">duernberg-cover-test:1549</div><div class="t m" style="left:1716px;top:572.15px;font-family:'Liberation Mono', monospace;font-size:22px;"><span style="color:#000">desktop .cover–inner </span><span style="color:#b2b2b2">{</span></div><div class="t m" style="left:1753px;top:598.15px;font-family:'Liberation Mono', monospace;font-size:22px;"><span style="color:#a70f99">padding–top</span><span style="color:#b2b2b2">:</span><span style="color:#000"> 0px</span><span style="color:#b2b2b2">;</span></div><div class="t m" style="left:1717px;top:624.15px;font-family:'Liberation Mono', monospace;font-size:22px;"><span style="color:#b2b2b2">}</span></div><div style="left:1704px;top:654px;width:520px;height:1px;background:#dcdcdc;"></div><svg style="position:absolute;left:1714px;top:664px;" width="28" height="28" viewBox="0 0 28 28"><rect x="1" y="1" width="26" height="26" rx="4" fill="#8fb5e0" stroke="#5f8ac0" stroke-width="2"/><rect x="11.3" y="8.5" width="5.4" height="11" fill="#5f8ac0" opacity="0.35"/><path d="M10.8 5.2 Q7.3 5.2 7.3 8.5 V11 Q7.3 14 5 14 Q7.3 14 7.3 17 V19.5 Q7.3 22.8 10.8 22.8" fill="none" stroke="#fff" stroke-width="2.8"/><path d="M17.2 5.2 Q20.7 5.2 20.7 8.5 V11 Q20.7 14 23 14 Q20.7 14 20.7 17 V19.5 Q20.7 22.8 17.2 22.8" fill="none" stroke="#fff" stroke-width="2.8"/></svg><div class="t m" style="left:1749px;top:671.15px;font-family:'Liberation Mono', monospace;font-size:22px;"><span style="color:#000">._100vh </span><span style="color:#b2b2b2">{</span></div><div class="t" style="left:1986.00px;top:666.37px;font-family:'Liberation Sans', sans-serif;font-size:22px;color:#7f7f7f;letter-spacing:0.000px;text-decoration:underline;text-decoration-thickness:1px;text-underline-offset:3px;">frontend.style.css:1253</div><div style="left:1704px;top:693px;width:520px;height:26px;background:#f1f6cc;"></div><div style="left:2220px;top:693px;width:4px;height:26px;background:#6cd100;"></div><svg style="position:absolute;left:1718px;top:697px;" width="20" height="19" viewBox="0 0 20 19"><rect x="0" y="0" width="20" height="19" rx="4" fill="#1a82f7"/><polyline points="5,10 8.5,13.5 15,5.5" fill="none" stroke="#fff" stroke-width="2.4"/></svg><div class="t m" style="left:1753px;top:696.15px;font-family:'Liberation Mono', monospace;font-size:22px;"><span style="color:#a70f99">min–height</span><span style="color:#b2b2b2">:</span></div><div style="left:1905px;top:691px;width:65px;height:30px;background:#fff;box-shadow:0 1px 3px rgba(0,0,0,0.35);"></div><div class="t m" style="left:1911px;top:696.15px;font-family:'Liberation Mono', monospace;font-size:22px;"><span style="color:#000">60vh</span></div><div style="left:1926px;top:696px;width:2px;height:22px;background:#000;"></div><div class="t m" style="left:1717px;top:722.15px;font-family:'Liberation Mono', monospace;font-size:22px;"><span style="color:#b2b2b2">}</span></div><div style="left:1704px;top:753px;width:520px;height:1px;background:#dcdcdc;"></div><div style="left:1704px;top:754px;width:520px;height:150px;background:#f7f7f7;"></div><svg style="position:absolute;left:1714px;top:763px;" width="28" height="28" viewBox="0 0 28 28"><rect x="1" y="1" width="26" height="26" rx="4" fill="#e79898" stroke="#c86a6a" stroke-width="2"/><rect x="11.3" y="8.5" width="5.4" height="11" fill="#c86a6a" opacity="0.35"/><path d="M10.8 5.2 Q7.3 5.2 7.3 8.5 V11 Q7.3 14 5 14 Q7.3 14 7.3 17 V19.5 Q7.3 22.8 10.8 22.8" fill="none" stroke="#fff" stroke-width="2.8"/><path d="M17.2 5.2 Q20.7 5.2 20.7 8.5 V11 Q20.7 14 23 14 Q20.7 14 20.7 17 V19.5 Q20.7 22.8 17.2 22.8" fill="none" stroke="#fff" stroke-width="2.8"/></svg><div class="t m" style="left:1749px;top:770.15px;font-family:'Liberation Mono', monospace;font-size:22px;"><span style="color:#8a8a8a">address,</span></div><div class="t" style="left:1966.00px;top:765.37px;font-family:'Liberation Sans', sans-serif;font-size:22px;color:#7f7f7f;letter-spacing:0.025px;">User-Agent-Stylesheet</div><svg style="position:absolute;left:2196px;top:764px;" width="18" height="20" viewBox="0 0 18 20"><path d="M4 9 V6 Q4 1.5 9 1.5 Q14 1.5 14 6 V9" fill="none" stroke="#8a8a8a" stroke-width="2.4"/><rect x="1" y="9" width="16" height="11" rx="1.5" fill="#8a8a8a"/></svg><div class="t m" style="left:1717px;top:796.15px;font-family:'Liberation Mono', monospace;font-size:22px;"><span style="color:#8a8a8a">article, aside, </span><span style="color:#000">div</span><span style="color:#8a8a8a">, footer, header,</span></div><div class="t m" style="left:1717px;top:822.15px;font-family:'Liberation Mono', monospace;font-size:22px;"><span style="color:#8a8a8a">hgroup, layer, main, nav, section </span><span style="color:#b2b2b2">{</span></div><div class="t m" style="left:1753px;top:848.15px;font-family:'Liberation Mono', monospace;font-size:22px;"><span style="color:#a70f99">display</span><span style="color:#b2b2b2">:</span><span style="color:#000"> block</span><span style="color:#b2b2b2">;</span></div><div class="t m" style="left:1717px;top:873.15px;font-family:'Liberation Mono', monospace;font-size:22px;"><span style="color:#b2b2b2">}</span></div><div style="left:1704px;top:904px;width:520px;height:1px;background:#dcdcdc;"></div><div style="left:1704px;top:905px;width:520px;height:96px;background:#ececec;"></div><div class="t" style="left:1715.70px;top:916.57px;font-family:'Liberation Sans', sans-serif;font-size:23px;color:#555;letter-spacing:0.211px;">Geerbt von</div><div class="t" style="left:1838.00px;top:916.57px;font-family:'Liberation Sans', sans-serif;font-size:23px;color:#555;letter-spacing:0.586px;text-decoration:underline;text-decoration-thickness:1px;text-underline-offset:3px;">div.cover-region.cover-region-</div><div class="t" style="left:1715.70px;top:942.57px;font-family:'Liberation Sans', sans-serif;font-size:23px;color:#555;letter-spacing:0.344px;text-decoration:underline;text-decoration-thickness:1px;text-underline-offset:3px;">desktop._100vh._100vh-not-set-by-</div><div class="t" style="left:1715.70px;top:968.57px;font-family:'Liberation Sans', sans-serif;font-size:23px;color:#555;letter-spacing:0.474px;text-decoration:underline;text-decoration-thickness:1px;text-underline-offset:3px;">user.clickable-cover</div><div style="left:1704px;top:1001px;width:520px;height:2px;background:#c8c8c8;"></div><div style="left:1704px;top:1003px;width:520px;height:57px;background:#ececec;"></div><svg style="position:absolute;left:1718px;top:1021px;" width="26" height="26" viewBox="0 0 26 26"><path d="M13 0 V26 M0 13 H26" stroke="#333" stroke-width="2"/></svg><div style="left:1759px;top:1011px;width:343px;height:41px;background:#ededed;border:1px solid #c4c4c4;border-radius:8px;"></div><svg style="position:absolute;left:1768px;top:1019px;" width="26" height="26" viewBox="0 0 26 26"><circle cx="13" cy="13" r="11.5" fill="none" stroke="#8a8a8a" stroke-width="2"/><path d="M7 10 H19 M9 14 H17 M11 18 H15" stroke="#8a8a8a" stroke-width="2"/></svg><div class="t" style="left:1800.80px;top:1022.57px;font-family:'Liberation Sans', sans-serif;font-size:23px;color:#a0a0a0;letter-spacing:0.400px;">Filter</div><div class="t" style="left:2123.00px;top:1022.57px;font-family:'Liberation Sans', sans-serif;font-size:23px;color:#111;letter-spacing:0.167px;">Klassen</div><div style="left:2226px;top:300px;width:650px;height:703px;background:#fff;"></div><svg style="position:absolute;left:2238px;top:316px;" width="18" height="15" viewBox="0 0 18 15"><polygon points="0,0 18,0 9,15" fill="#8a8a8a"/></svg><div class="t" style="left:2267.70px;top:311.57px;font-family:'Liberation Sans', sans-serif;font-size:23px;color:#333;letter-spacing:0.333px;font-weight:bold;">Box-Modell</div><div style="left:2305px;top:352px;width:492px;height:429px;border:2px dotted #8a8a8a;box-sizing:border-box;"></div><div class="t" style="left:2316.50px;top:362.97px;font-family:'Liberation Sans', sans-serif;font-size:25px;color:#000;letter-spacing:0.614px;">position</div><div style="left:2346px;top:400px;width:410px;height:333px;background:#f9cc9d;border:2px dashed #000;box-sizing:border-box;"></div><div class="t" style="left:2358.00px;top:410.97px;font-family:'Liberation Sans', sans-serif;font-size:25px;color:#000;letter-spacing:0.100px;">margin</div><div style="left:2389px;top:449px;width:324px;height:237px;background:#fcdb9a;border:2px solid #000;box-sizing:border-box;"></div><div class="t" style="left:2439.00px;top:459.97px;font-family:'Liberation Sans', sans-serif;font-size:25px;color:#000;letter-spacing:0.680px;">border</div><div style="left:2429px;top:497px;width:244px;height:140px;background:#c4ce8b;border:2px dashed #808080;box-sizing:border-box;"></div><div class="t" style="left:2441.00px;top:506.97px;font-family:'Liberation Sans', sans-serif;font-size:25px;color:#000;letter-spacing:0.500px;">padding</div><div style="left:2472px;top:545px;width:159px;height:45px;background:#8cb6c0;border:2px solid #808080;box-sizing:border-box;"></div><div class="t" style="left:2484.50px;top:555.97px;font-family:'Liberation Sans', sans-serif;font-size:25px;color:#000;letter-spacing:0.556px;">1662 × 853</div><div style="left:2543px;top:379px;width:16px;height:3px;background:#000;"></div><div style="left:2543px;top:427px;width:16px;height:3px;background:#000;"></div><div style="left:2401px;top:474px;width:16px;height:3px;background:#000;"></div><div style="left:2543px;top:474px;width:16px;height:3px;background:#000;"></div><div style="left:2684px;top:474px;width:16px;height:3px;background:#000;"></div><div style="left:2543px;top:522px;width:16px;height:3px;background:#000;"></div><div style="left:2318px;top:569px;width:16px;height:3px;background:#000;"></div><div style="left:2360px;top:569px;width:16px;height:3px;background:#000;"></div><div style="left:2401px;top:569px;width:16px;height:3px;background:#000;"></div><div style="left:2443px;top:569px;width:16px;height:3px;background:#000;"></div><div style="left:2642px;top:569px;width:16px;height:3px;background:#000;"></div><div style="left:2684px;top:569px;width:16px;height:3px;background:#000;"></div><div style="left:2726px;top:569px;width:16px;height:3px;background:#000;"></div><div style="left:2768px;top:569px;width:16px;height:3px;background:#000;"></div><div style="left:2543px;top:615px;width:16px;height:3px;background:#000;"></div><div style="left:2401px;top:664px;width:16px;height:3px;background:#000;"></div><div style="left:2543px;top:663px;width:16px;height:3px;background:#000;"></div><div style="left:2684px;top:664px;width:16px;height:3px;background:#000;"></div><div style="left:2543px;top:711px;width:16px;height:3px;background:#000;"></div><div style="left:2543px;top:759px;width:16px;height:3px;background:#000;"></div><div style="left:2226px;top:800px;width:650px;height:1px;background:#cfcfcf;"></div><svg style="position:absolute;left:2238px;top:818px;" width="18" height="15" viewBox="0 0 18 15"><polygon points="0,0 18,0 9,15" fill="#8a8a8a"/></svg><div class="t" style="left:2267.90px;top:812.57px;font-family:'Liberation Sans', sans-serif;font-size:23px;color:#333;letter-spacing:0.250px;font-weight:bold;">Eigenschaften</div><svg style="position:absolute;left:2840px;top:809px;" width="26" height="26" viewBox="0 0 26 26"><circle cx="13" cy="13" r="11.5" fill="none" stroke="#8a8a8a" stroke-width="2"/><path d="M7 10 H19 M9 14 H17 M11 18 H15" stroke="#8a8a8a" stroke-width="2"/></svg><svg style="position:absolute;left:2246px;top:853px;" width="15" height="17" viewBox="0 0 15 17"><polygon points="0,0 15,8.5 0,17" fill="#8a8a8a"/></svg><svg style="position:absolute;left:2246px;top:883px;" width="15" height="17" viewBox="0 0 15 17"><polygon points="0,0 15,8.5 0,17" fill="#8a8a8a"/></svg><svg style="position:absolute;left:2246px;top:913px;" width="15" height="17" viewBox="0 0 15 17"><polygon points="0,0 15,8.5 0,17" fill="#8a8a8a"/></svg><svg style="position:absolute;left:2246px;top:943px;" width="15" height="17" viewBox="0 0 15 17"><polygon points="0,0 15,8.5 0,17" fill="#8a8a8a"/></svg><svg style="position:absolute;left:2246px;top:973px;" width="15" height="17" viewBox="0 0 15 17"><polygon points="0,0 15,8.5 0,17" fill="#8a8a8a"/></svg><div class="t" style="left:2268.20px;top:851.77px;font-family:'Liberation Sans', sans-serif;font-size:24px;color:#000;letter-spacing:1.121px;"><span style="color:#a70f99">-webkit-box-direction</span><span style="color:#b0b0b0">:</span> normal<span style="color:#b0b0b0">;</span></div><div class="t" style="left:2268.20px;top:881.77px;font-family:'Liberation Sans', sans-serif;font-size:24px;color:#000;letter-spacing:1.057px;"><span style="color:#a70f99">-webkit-font-smoothing</span><span style="color:#b0b0b0">:</span> antialiased<span style="color:#b0b0b0">;</span></div><div class="t" style="left:2268.20px;top:910.77px;font-family:'Liberation Sans', sans-serif;font-size:24px;color:#000;letter-spacing:1.113px;"><span style="color:#a70f99">background-color</span><span style="color:#b0b0b0">:</span></div><div class="t" style="left:2514.00px;top:910.77px;font-family:'Liberation Sans', sans-serif;font-size:24px;color:#000;letter-spacing:0.981px;">rgba(0, 0, 0, 0)<span style="color:#b0b0b0">;</span></div><svg style="position:absolute;left:2484px;top:912px;" width="24" height="23" viewBox="0 0 24 23"><rect x="0.75" y="0.75" width="22.5" height="21.5" rx="4" fill="#fff" stroke="#a0a0a0" stroke-width="1.5"/><rect x="1.5" y="1.5" width="10.5" height="10" fill="#d8d8d8"/><rect x="12" y="11.5" width="10.5" height="10" fill="#cfcfcf"/></svg><div class="t" style="left:2268.20px;top:940.77px;font-family:'Liberation Sans', sans-serif;font-size:24px;color:#000;letter-spacing:1.040px;"><span style="color:#a70f99">color</span><span style="color:#b0b0b0">:</span></div><div style="left:2339px;top:942px;width:24px;height:23px;background:#000;border-radius:4px;"></div><div class="t" style="left:2368.40px;top:940.77px;font-family:'Liberation Sans', sans-serif;font-size:24px;color:#000;letter-spacing:1.183px;">rgb(0, 0, 0)<span style="color:#b0b0b0">;</span></div><div class="t" style="left:2268.20px;top:970.77px;font-family:'Liberation Sans', sans-serif;font-size:24px;color:#000;letter-spacing:0.947px;"><span style="color:#a70f99">cursor</span><span style="color:#b0b0b0">:</span> pointer<span style="color:#b0b0b0">;</span></div><div style="left:2226px;top:1001px;width:650px;height:2px;background:#c8c8c8;"></div><div style="left:2226px;top:1003px;width:650px;height:57px;background:#ececec;"></div><div style="left:2239px;top:1012px;width:623px;height:40px;background:#ededed;border:1px solid #c4c4c4;border-radius:8px;"></div><svg style="position:absolute;left:2248px;top:1019px;" width="26" height="26" viewBox="0 0 26 26"><circle cx="13" cy="13" r="11.5" fill="none" stroke="#8a8a8a" stroke-width="2"/><path d="M7 10 H19 M9 14 H17 M11 18 H15" stroke="#8a8a8a" stroke-width="2"/></svg><div class="t" style="left:2281.00px;top:1021.57px;font-family:'Liberation Sans', sans-serif;font-size:23px;color:#a0a0a0;letter-spacing:0.400px;">Filter</div><div style="left:232px;top:1060px;width:2644px;height:2px;background:#b4b4b4;"></div><div style="left:232px;top:1062px;width:2644px;height:56px;background:#ececec;"></div><div style="left:232px;top:1118px;width:2644px;height:2px;background:#b4b4b4;"></div><svg style="position:absolute;left:248px;top:1078px;" width="28" height="24" viewBox="0 0 28 24"><rect x="1" y="1" width="26" height="22" fill="none" stroke="#555" stroke-width="2"/><polygon points="7,7.5 21,7.5 14,15.5" fill="none" stroke="#555" stroke-width="2" stroke-linejoin="round"/></svg><div style="left:748px;top:1078px;width:22px;height:22px;background:#fff;border:1px solid #b5b5b5;border-radius:5px;box-shadow:0 1px 1px rgba(0,0,0,0.08);"></div><div class="t" style="left:779.00px;top:1078.57px;font-family:'Liberation Sans', sans-serif;font-size:23px;color:#222;letter-spacing:0.400px;">Protokoll beibehalten</div><div style="left:1038px;top:1078px;width:22px;height:22px;background:#fff;border:1px solid #b5b5b5;border-radius:5px;box-shadow:0 1px 1px rgba(0,0,0,0.08);"></div><div class="t" style="left:1070.60px;top:1078.57px;font-family:'Liberation Sans', sans-serif;font-size:23px;color:#222;letter-spacing:0.304px;">Benutzergesten emulieren</div><div style="left:1364px;top:1075px;width:3px;height:31px;background:#c4c4c4;"></div><div class="t" style="left:1389.30px;top:1078.57px;font-family:'Liberation Sans', sans-serif;font-size:23px;color:#111;letter-spacing:-0.200px;">Alle</div><div style="left:1448px;top:1073px;width:174px;height:34px;background:#0a7aff;border-radius:7px;"></div><div class="t" style="left:1460.00px;top:1078.57px;font-family:'Liberation Sans', sans-serif;font-size:23px;color:#fff;letter-spacing:0.273px;">Auswertungen</div><div style="left:1630px;top:1073px;width:90px;height:34px;background:#0a7aff;border-radius:7px;"></div><div class="t" style="left:1640.30px;top:1078.57px;font-family:'Liberation Sans', sans-serif;font-size:23px;color:#fff;letter-spacing:0.140px;">Fehler</div><div class="t" style="left:1740.50px;top:1078.57px;font-family:'Liberation Sans', sans-serif;font-size:23px;color:#111;letter-spacing:0.088px;">Warnungen</div><div class="t" style="left:1889.40px;top:1078.57px;font-family:'Liberation Sans', sans-serif;font-size:23px;color:#111;letter-spacing:0.556px;">Protokolle</div><div class="t" style="left:2026.70px;top:1078.57px;font-family:'Liberation Sans', sans-serif;font-size:23px;color:#111;letter-spacing:0.750px;">Infos</div><div class="t" style="left:2109.80px;top:1078.57px;font-family:'Liberation Sans', sans-serif;font-size:23px;color:#111;letter-spacing:0.540px;">Debugs</div><div style="left:2215px;top:1075px;width:3px;height:31px;background:#c4c4c4;"></div><div style="left:2227px;top:1073px;width:63px;height:34px;background:#0a7aff;border-radius:7px;"></div><div class="t" style="left:2238.60px;top:1078.57px;font-family:'Liberation Sans', sans-serif;font-size:23px;color:#fff;letter-spacing:0.000px;">Alle</div><div class="t" style="left:2308.00px;top:1078.57px;font-family:'Liberation Sans', sans-serif;font-size:23px;color:#111;letter-spacing:0.480px;">Medien</div><div class="t" style="left:2416.20px;top:1078.57px;font-family:'Liberation Sans', sans-serif;font-size:23px;color:#111;letter-spacing:0.330px;">MediaSource</div><div class="t" style="left:2588.00px;top:1078.57px;font-family:'Liberation Sans', sans-serif;font-size:23px;color:#111;letter-spacing:-0.840px;">WebRTC</div><div style="left:2700px;top:1074px;width:2px;height:32px;background:#c4c4c4;"></div><svg style="position:absolute;left:2716px;top:1075px;" width="30" height="30" viewBox="0 0 30 30"><path d="M3.44 10.79 A12.3 12.3 0 0 1 18.18 3.12" fill="none" stroke="#4a4a4a" stroke-width="2.6"/><polygon points="24.46,4.80 19.27,-0.94 17.10,7.18" fill="#4a4a4a"/><path d="M24.42 7.09 A12.3 12.3 0 0 1 23.70 23.70" fill="none" stroke="#4a4a4a" stroke-width="2.6"/><polygon points="19.10,28.29 26.67,26.67 20.73,20.73" fill="#4a4a4a"/><path d="M17.14 27.11 A12.3 12.3 0 0 1 3.12 18.18" fill="none" stroke="#4a4a4a" stroke-width="2.6"/><polygon points="1.44,11.90 -0.94,19.27 7.18,17.10" fill="#4a4a4a"/></svg><svg style="position:absolute;left:2776px;top:1076px;" width="26" height="26" viewBox="0 0 26 26"><path d="M1 5 H25" stroke="#4a4a4a" stroke-width="2.4" stroke-linecap="round"/><path d="M9 4.5 V1.5 H17 V4.5" fill="none" stroke="#4a4a4a" stroke-width="2"/><path d="M3.5 5 L5.5 25 H20.5 L22.5 5" fill="none" stroke="#4a4a4a" stroke-width="2" stroke-linejoin="round"/><path d="M8.5 10 L17.5 19 M17.5 10 L8.5 19" stroke="#4a4a4a" stroke-width="2"/></svg><div style="left:2814px;top:1074px;width:2px;height:32px;background:#c4c4c4;"></div><svg style="position:absolute;left:2837px;top:1079px;" width="18" height="22" viewBox="0 0 18 22"><polyline points="1,9 9,1 17,9" fill="none" stroke="#4a4a4a" stroke-width="2"/><polyline points="1,21 9,13 17,21" fill="none" stroke="#4a4a4a" stroke-width="2"/></svg><div style="left:232px;top:1120px;width:2644px;height:178px;overflow:hidden;background:#fff;"><div style="left:0px;top:-10px;width:2644px;height:34px;background:#ffe9ea;"></div><div style="left:0px;top:24px;width:2644px;height:2px;background:#fbd6d8;"></div><svg style="position:absolute;left:8px;top:-11px;" width="24" height="24" viewBox="0 0 24 24"><polygon points="7,0 17,0 24,7 24,17 17,24 7,24 0,17 0,7" fill="#e22c26"/><rect x="10.3" y="4" width="3.4" height="10" rx="1.2" fill="#fff"/><circle cx="12" cy="18.5" r="2" fill="#fff"/></svg><div class="t" style="left:39.00px;top:-9.03px;font-family:'Liberation Sans', sans-serif;font-size:25px;color:#c9211e;letter-spacing:0.309px;">Failed to load resource: the server responded with a status of 404 ()</div><div class="t" style="left:1504.00px;top:-9.03px;font-family:'Liberation Sans', sans-serif;font-size:25px;color:#555;letter-spacing:0.430px;text-decoration:underline;text-decoration-thickness:1px;text-underline-offset:3px;">https://fabiandraxl.com/wp-content/themes/lay/frontend/assets/vendor/backbone.radio.min.js.map</div><div style="left:0px;top:26px;width:2644px;height:42px;background:#ffe9ea;"></div><div style="left:0px;top:68px;width:2644px;height:2px;background:#fbd6d8;"></div><svg style="position:absolute;left:8px;top:33px;" width="24" height="24" viewBox="0 0 24 24"><polygon points="7,0 17,0 24,7 24,17 17,24 7,24 0,17 0,7" fill="#e22c26"/><rect x="10.3" y="4" width="3.4" height="10" rx="1.2" fill="#fff"/><circle cx="12" cy="18.5" r="2" fill="#fff"/></svg><div class="t" style="left:39.00px;top:34.97px;font-family:'Liberation Sans', sans-serif;font-size:25px;color:#c9211e;letter-spacing:0.309px;">Failed to load resource: the server responded with a status of 404 ()</div><div class="t" style="left:1313.00px;top:34.97px;font-family:'Liberation Sans', sans-serif;font-size:25px;color:#555;letter-spacing:0.473px;text-decoration:underline;text-decoration-thickness:1px;text-underline-offset:3px;">https://fabiandraxl.com/wp-content/plugins/laytheme-carousel/frontend/assets/js/vendor/swiper-bundle.min.js.map</div><svg style="position:absolute;left:14px;top:82px;" width="14" height="17" viewBox="0 0 14 17"><polyline points="2,1 11,8.5 2,16" fill="none" stroke="#777" stroke-width="3"/></svg><div style="left:40px;top:76px;width:233px;height:30px;background:#0a64e0;border-radius:7px;"></div><div class="t" style="left:48.50px;top:80.37px;font-family:'Liberation Sans', sans-serif;font-size:22px;color:#fff;letter-spacing:-0.447px;-webkit-text-stroke:0.6px #fff;">Ausgewähltes Element</div><div style="left:0px;top:110px;width:2644px;height:2px;background:#ebebeb;"></div><svg style="position:absolute;left:11px;top:122px;" width="20" height="20" viewBox="0 0 20 20"><polyline points="9,2 2.5,10 9,18" fill="none" stroke="#b3b3b3" stroke-width="3.4" stroke-linecap="round" stroke-linejoin="round"/><circle cx="16" cy="10" r="2.4" fill="#b3b3b3"/></svg><svg style="position:absolute;left:50px;top:123px;" width="15" height="18" viewBox="0 0 15 18"><polygon points="0,0 15,9 0,18" fill="#8a8a8a"/></svg><div class="t m" style="left:74px;top:121.15px;font-family:'Liberation Mono', monospace;font-size:22px;"><span style="color:#aa0d91">&lt;div</span><span style="color:#000"> </span><span style="color:#836c28">class</span><span style="color:#aa0d91">=</span><span style="color:#aa0d91">"</span><span style="color:#c41a16">cover–inner _100vh</span><span style="color:#aa0d91">"</span><span style="color:#aa0d91">&gt;</span><span style="color:#000;font-weight:bold">…</span><span style="color:#aa0d91">&lt;/div&gt;</span><span style="color:#000">  </span><span style="color:#999">= $1</span></div><div style="left:0px;top:152px;width:2644px;height:2px;background:#fbd6d8;"></div><div style="left:0px;top:154px;width:2644px;height:56px;background:#ffe9ea;"></div><div style="left:0px;top:210px;width:2644px;height:2px;background:#fbd6d8;"></div><svg style="position:absolute;left:8px;top:162px;" width="24" height="24" viewBox="0 0 24 24"><polygon points="7,0 17,0 24,7 24,17 17,24 7,24 0,17 0,7" fill="#e22c26"/><rect x="10.3" y="4" width="3.4" height="10" rx="1.2" fill="#fff"/><circle cx="12" cy="18.5" r="2" fill="#fff"/></svg><div class="t" style="left:39.00px;top:163.97px;font-family:'Liberation Sans', sans-serif;font-size:25px;color:#c9211e;letter-spacing:0.309px;">Failed to load resource: the server responded with a status of 404 ()</div><div class="t" style="left:1504.00px;top:163.97px;font-family:'Liberation Sans', sans-serif;font-size:25px;color:#555;letter-spacing:0.430px;text-decoration:underline;text-decoration-thickness:1px;text-underline-offset:3px;">https://fabiandraxl.com/wp-content/themes/lay/frontend/assets/vendor/backbone.radio.min.js.map</div></div></body></html>
